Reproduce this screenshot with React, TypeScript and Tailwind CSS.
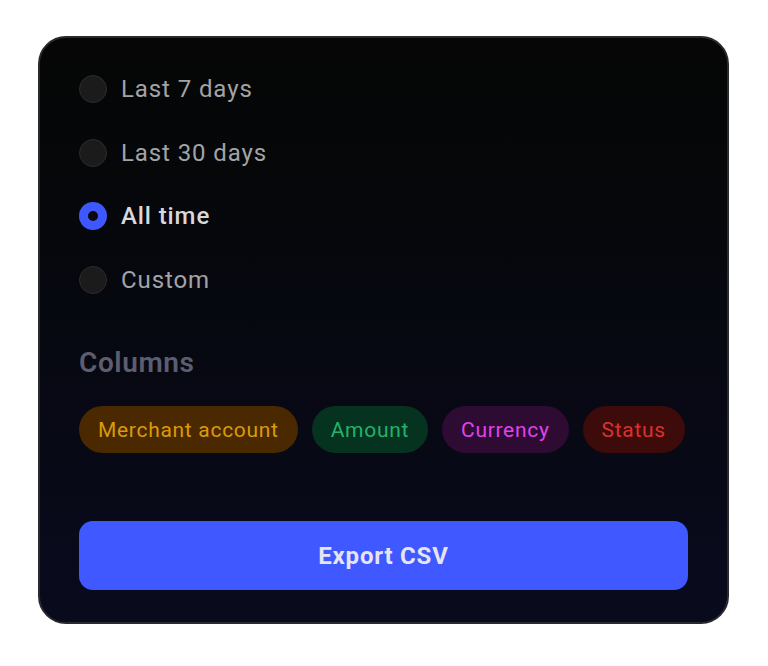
import { useState } from "react";

const RANGES = ["Last 7 days", "Last 30 days", "All time", "Custom"];

const COLUMNS = [
  { label: "Merchant account", cls: "bg-[#4a2900] text-[#d99b0a]" },
  { label: "Amount", cls: "bg-[#05331f] text-[#22b26b]" },
  { label: "Currency", cls: "bg-[#2e0b33] text-[#e043ea]" },
  { label: "Status", cls: "bg-[#3d0b0a] text-[#d83232]" },
];

export default function App() {
  const [range, setRange] = useState("All time");

  return (
    <div className="min-h-[666px] w-[768px] bg-white pt-[36px] pl-[38px]" style={{ fontFamily: "Roboto, 'Noto Sans', sans-serif" }}>
      <div className="w-[691px] h-[588px] rounded-[28px] border-2 border-[#2a2a2c] bg-gradient-to-b from-[#050605] to-[#090a1d] px-[39px] pt-[37px] pb-[32px] flex flex-col">
        {/* Range options */}
        <div className="flex flex-col gap-[35.5px]">
          {RANGES.map((r) => {
            const active = r === range;
            return (
              <button key={r} onClick={() => setRange(r)} className="flex items-center gap-[14px] h-[28px] text-left">
                {active ? (
                  <span className="w-[28px] h-[28px] rounded-full bg-[#3f57ff] flex items-center justify-center flex-shrink-0">
                    <span className="w-[10px] h-[10px] rounded-full bg-[#0a0a0d]" />
                  </span>
                ) : (
                  <span className="w-[28px] h-[28px] rounded-full bg-[#1b1b1c] border border-[#2c2c2e] flex-shrink-0" />
                )}
                <span className={active ? "text-[24px] font-medium text-[#d9d9dc] tracking-[0.9px]" : "text-[24px] text-[#a3a3a6] tracking-[0.9px]"}>{r}</span>
              </button>
            );
          })}
        </div>

        <h3 className="mt-[52px] text-[28px] leading-[34px] font-semibold text-[#5d5d70] tracking-[0.6px]">Columns</h3>

        <div className="mt-[26px] flex gap-[14px]">
          {COLUMNS.map((c) => (
            <span key={c.label} className={"h-[47px] px-[19px] pt-[3px] rounded-full flex items-center text-[21px] tracking-[0.7px] " + c.cls}>
              {c.label}
            </span>
          ))}
        </div>

        <button className="mt-auto h-[69px] w-full rounded-[14px] bg-[#3f58ff] text-[24px] font-bold text-[#e4e5f0] tracking-[0.8px]">
          Export CSV
        </button>
      </div>
    </div>
  );
}
